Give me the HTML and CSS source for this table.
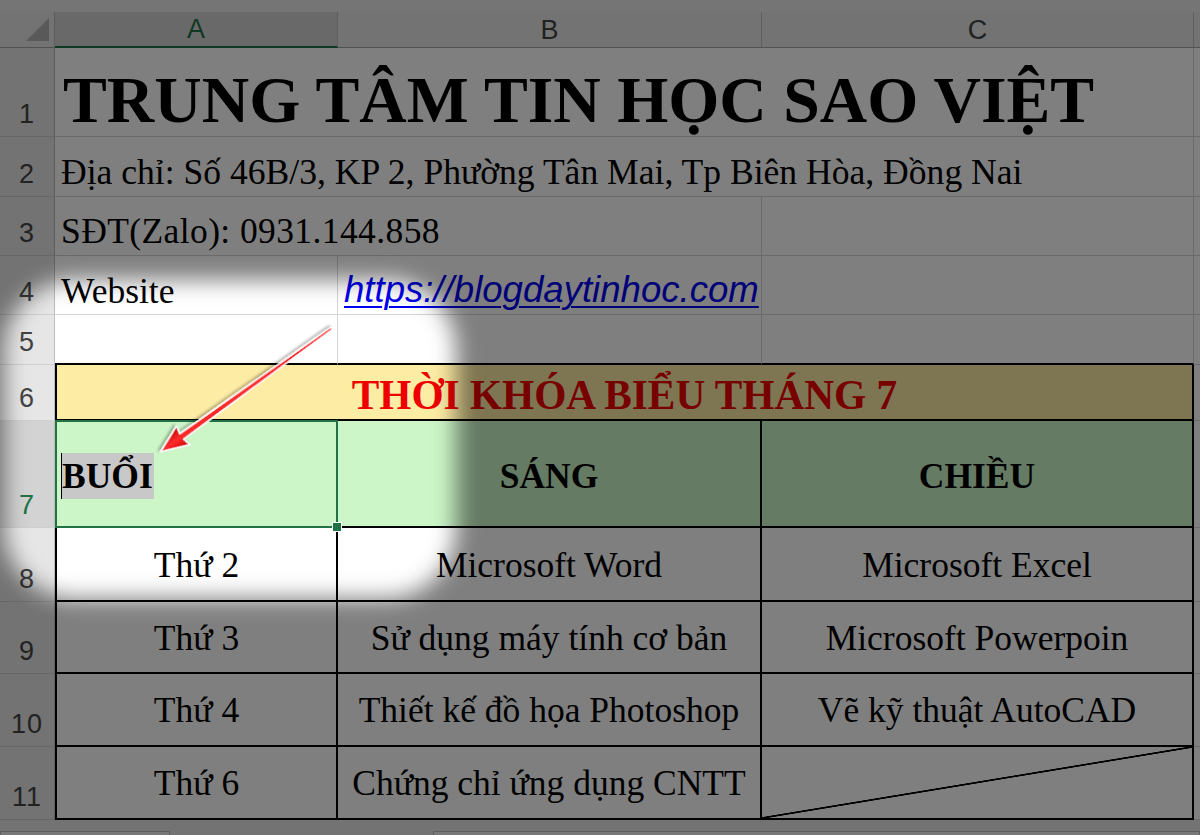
FILE: index.html
```html
<!DOCTYPE html>
<html lang="vi">
<head>
<meta charset="utf-8">
<title>Thời khóa biểu</title>
<link rel="stylesheet" href="styles.css">
</head>
<body>
<div class="sheet">
  <div class="topstrip"></div>

  <div class="corner"><span class="tri"></span></div>
  <div class="colhead sel">A</div>
  <div class="colhead">B</div>
  <div class="colhead">C</div>
  <div class="colhead last"></div>

  <div class="rowhead">1</div>
  <div class="cell span3 title">TRUNG TÂM TIN HỌC SAO VIỆT</div>
  <div class="cell d"></div>

  <div class="rowhead">2</div>
  <div class="cell span3 info r2">Địa chỉ: Số 46B/3, KP 2, Phường Tân Mai, Tp Biên Hòa, Đồng Nai</div>
  <div class="cell d"></div>

  <div class="rowhead">3</div>
  <div class="cell span2 info r3">SĐT(Zalo): 0931.144.858</div>
  <div class="cell"></div>
  <div class="cell d"></div>

  <div class="rowhead">4</div>
  <div class="cell info r4">Website</div>
  <div class="cell link r4"><span class="url">https://blogdaytinhoc.com</span></div>
  <div class="cell"></div>
  <div class="cell d"></div>

  <div class="rowhead">5</div>
  <div class="cell above"></div>
  <div class="cell above"></div>
  <div class="cell above"></div>
  <div class="cell d"></div>

  <div class="rowhead">6</div>
  <div class="cell t first span3 heading">THỜI KHÓA BIỂU THÁNG 7</div>
  <div class="cell d"></div>

  <div class="rowhead selrow">7</div>
  <div class="cell t first green a7"><span class="edit">BUỔI</span></div>
  <div class="cell t green hdr">SÁNG</div>
  <div class="cell t green hdr">CHIỀU</div>
  <div class="cell d"></div>

  <div class="rowhead">8</div>
  <div class="cell t first data">Thứ 2</div>
  <div class="cell t data">Microsoft Word</div>
  <div class="cell t data">Microsoft Excel</div>
  <div class="cell d"></div>

  <div class="rowhead">9</div>
  <div class="cell t first data">Thứ 3</div>
  <div class="cell t data">Sử dụng máy tính cơ bản</div>
  <div class="cell t data">Microsoft Powerpoin</div>
  <div class="cell d"></div>

  <div class="rowhead">10</div>
  <div class="cell t first data">Thứ 4</div>
  <div class="cell t data">Thiết kế đồ họa Photoshop</div>
  <div class="cell t data">Vẽ kỹ thuật AutoCAD</div>
  <div class="cell d"></div>

  <div class="rowhead">11</div>
  <div class="cell t first data">Thứ 6</div>
  <div class="cell t data">Chứng chỉ ứng dụng CNTT</div>
  <div class="cell t data diag"></div>
  <div class="cell d"></div>

  <div class="bottombar">
    <span class="tabbox tabs"></span>
    <span class="tabbox scroll"></span>
  </div>

  <svg class="dim" width="1200" height="835" viewBox="0 0 1200 835" aria-hidden="true">
    <defs>
      <filter id="soft" x="-30%" y="-30%" width="160%" height="160%">
        <feGaussianBlur stdDeviation="11"/>
      </filter>
      <mask id="hole" maskUnits="userSpaceOnUse" x="0" y="0" width="1200" height="835">
        <rect x="0" y="0" width="1200" height="835" fill="#fff"/>
        <rect x="4" y="280" width="452" height="318" rx="70" fill="#000" filter="url(#soft)"/>
      </mask>
    </defs>
    <rect x="0" y="0" width="1200" height="835" fill="#000" fill-opacity="0.5" mask="url(#hole)"/>
  </svg>

  <svg class="arrow" width="1200" height="835" viewBox="0 0 1200 835" aria-hidden="true">
    <defs>
      <linearGradient id="red" x1="0" y1="0" x2="0" y2="1">
        <stop offset="0" stop-color="#c40000"/>
        <stop offset="0.5" stop-color="#ff2b2b"/>
        <stop offset="1" stop-color="#c40000"/>
      </linearGradient>
      <filter id="shadow" x="-20%" y="-20%" width="140%" height="140%">
        <feDropShadow dx="1" dy="2" stdDeviation="1.6" flood-color="#000" flood-opacity="0.35"/>
      </filter>
    </defs>
    <g transform="translate(331.7 328.3) rotate(144.2)" filter="url(#shadow)">
      <polygon points="0,-1.2 185,-3.4 183,-11.5 211,0 183,11.5 185,3.4 0,1.2" fill="url(#red)" stroke="#fff" stroke-width="1.6" stroke-linejoin="round"/>
    </g>
  </svg>
</div>
</body>
</html>
```

FILE: styles.css
```css
* {
  box-sizing: border-box;
}

html,
body {
  margin: 0;
  padding: 0;
}

body {
  width: 1200px;
  height: 835px;
  overflow: hidden;
  background: #fff;
}

.sheet {
  position: relative;
  width: 1200px;
  height: 835px;
  display: grid;
  grid-template-columns: 55px 283px 424px 432px 6px;
  grid-template-rows: 12px 36px 89px 60px 59px 59px 50px 56px 107px 74px 72px 73px 73px 15px;
  font-family: "Liberation Serif", "Times New Roman", serif;
  color: #000;
  background: #fff;
  overflow: hidden;
}

.topstrip {
  grid-column: 1 / -1;
  background: #ebebeb;
}

/* column headers */
.corner,
.colhead {
  background: #e6e6e6;
  border-right: 1px solid #bdbdbd;
  border-bottom: 1px solid #a3a3a3;
}

.corner {
  display: flex;
  align-items: flex-end;
  justify-content: flex-end;
  padding: 0 5px 6px 0;
}

.tri {
  width: 23px;
  height: 23px;
  background: #b3b3b3;
  clip-path: polygon(100% 0, 100% 100%, 0 100%);
}

.colhead {
  display: flex;
  align-items: center;
  justify-content: center;
  font-family: "Liberation Sans", Arial, sans-serif;
  font-size: 27px;
  line-height: 1;
  color: #444;
  padding-top: 1px;
}

.colhead.sel {
  background: #d3d3d3;
  border-bottom: 2px solid #217346;
  color: #217346;
}

.colhead.last {
  border-right: none;
}

/* row headers */
.rowhead {
  background: #e6e6e6;
  border-right: 1px solid #bdbdbd;
  border-bottom: 1px solid #cfcfcf;
  display: flex;
  align-items: flex-end;
  justify-content: center;
  padding-bottom: 8px;
  font-family: "Liberation Sans", Arial, sans-serif;
  font-size: 27px;
  line-height: 1;
  color: #444;
  letter-spacing: 1px;
}

.rowhead.selrow {
  background: #d3d3d3;
  color: #217346;
}

/* cells */
.cell {
  background: #fff;
  border-right: 1px solid #d4d4d4;
  border-bottom: 1px solid #d4d4d4;
  display: flex;
  align-items: flex-end;
  padding-left: 6px;
  font-size: 35.5px;
  line-height: 1;
  white-space: nowrap;
  min-width: 0;
}

.cell.d {
  border-right: none;
}

.span3 {
  grid-column: 2 / 5;
}

.span2 {
  grid-column: 2 / 4;
}

.title {
  font-size: 65.7px;
  font-weight: bold;
  padding-left: 8px;
  padding-bottom: 3px;
}

.info.r2 {
  padding-bottom: 5px;
  font-size: 35.6px;
}

.info.r3 {
  padding-bottom: 6px;
  letter-spacing: 0.4px;
}

.r4 {
  padding-bottom: 5px;
}

.link {
  padding-left: 6px;
}

.url {
  font-family: "Liberation Sans", Arial, sans-serif;
  font-style: italic;
  font-size: 36.6px;
  color: #0000f0;
  text-decoration: underline;
  text-decoration-thickness: 2px;
  text-underline-offset: 4px;
}

.above {
  border-bottom: 2px solid #000;
}

/* table */
.t {
  border-right: 2px solid #000;
  border-bottom: 2px solid #000;
  justify-content: center;
  align-items: center;
  padding-left: 0;
}

.t.first {
  border-left: 2px solid #000;
}

.heading {
  background: #fdeca4;
  color: #ee0000;
  font-size: 41.3px;
  font-weight: bold;
  padding-top: 8px;
}

.green {
  background: #ccf6c8;
  font-weight: bold;
  padding-top: 6px;
}

.a7 {
  position: relative;
  justify-content: flex-start;
  padding-left: 4px;
  padding-top: 5px;
}

.a7::after {
  content: "";
  position: absolute;
  left: -2px;
  top: -1px;
  right: -2px;
  bottom: -2px;
  border: 2px solid #217346;
}

.a7::before {
  content: "";
  position: absolute;
  right: -6px;
  bottom: -6px;
  width: 8px;
  height: 8px;
  background: #217346;
  border: 1px solid #fff;
  z-index: 2;
}

.edit {
  background: #c8c8c8;
  line-height: 46px;
  border-left: 1px solid #000;
  padding-right: 1px;
}

.data {
  padding-top: 3px;
}

.diag {
  background: linear-gradient(to top left, transparent calc(50% - 1.2px), #000 calc(50% - 0.6px), #000 calc(50% + 0.6px), transparent calc(50% + 1.2px));
}

/* bottom bar */
.bottombar {
  grid-column: 1 / -1;
  background: #e6e6e6;
  display: flex;
  align-items: flex-end;
}

.tabbox {
  height: 4px;
  background: #f0f0f0;
  border: 1px solid #bdbdbd;
  border-bottom: none;
}

.tabs {
  width: 170px;
}

.scroll {
  margin-left: 263px;
  flex: 1;
}

/* overlays */
.dim,
.arrow {
  position: absolute;
  left: 0;
  top: 0;
  pointer-events: none;
}
```
